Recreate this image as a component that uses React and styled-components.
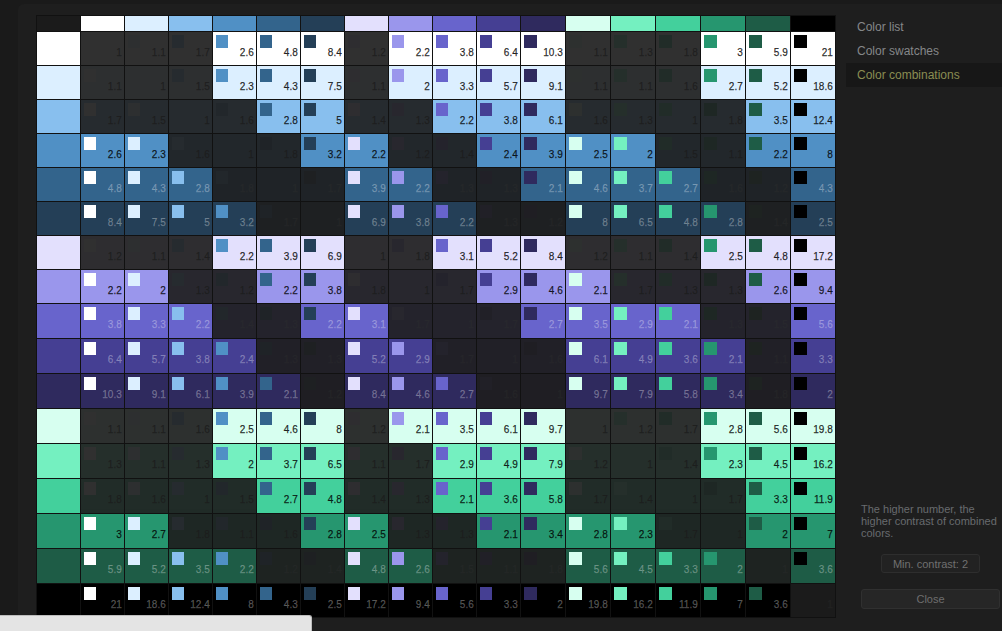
import React from 'react'
import styled, { createGlobalStyle } from 'styled-components'

const GlobalStyle = createGlobalStyle`
  html, body {
    margin: 0;
    height: 100%;
    background: #1a1a1a;
    overflow: hidden;
  }
  * {
    box-sizing: border-box;
  }
`

const colors = [
  { bg: '#ffffff', dark: true },
  { bg: '#dcefff', dark: true },
  { bg: '#88bfee', dark: true },
  { bg: '#5090c5', dark: true },
  { bg: '#33648c' },
  { bg: '#243f57' },
  { bg: '#e3e0fd', dark: true },
  { bg: '#9a96ec', dark: true },
  { bg: '#6864cc' },
  { bg: '#453f93' },
  { bg: '#2f2a5e' },
  { bg: '#d7fff0', dark: true },
  { bg: '#74f0c0', dark: true },
  { bg: '#43d09c', dark: true },
  { bg: '#26966f', dark: true },
  { bg: '#1e5c46' },
  { bg: '#000000' },
]

// upper triangle of the contrast table, the lower half mirrors it
const upper = [
  [1, 1.1, 1.7, 2.6, 4.8, 8.4, 1.2, 2.2, 3.8, 6.4, 10.3, 1.1, 1.3, 1.8, 3, 5.9, 21],
  [1, 1.5, 2.3, 4.3, 7.5, 1.1, 2, 3.3, 5.7, 9.1, 1.1, 1.1, 1.6, 2.7, 5.2, 18.6],
  [1, 1.6, 2.8, 5, 1.4, 1.3, 2.2, 3.8, 6.1, 1.6, 1.3, 1, 1.8, 3.5, 12.4],
  [1, 1.8, 3.2, 2.2, 1.2, 1.4, 2.4, 3.9, 2.5, 2, 1.5, 1.1, 2.2, 8],
  [1, 1.7, 3.9, 2.2, 1.3, 1.3, 2.1, 4.6, 3.7, 2.7, 1.6, 1.2, 4.3],
  [1, 6.9, 3.8, 2.2, 1.3, 1.2, 8, 6.5, 4.8, 2.8, 1.4, 2.5],
  [1, 1.8, 3.1, 5.2, 8.4, 1.2, 1.1, 1.4, 2.5, 4.8, 17.2],
  [1, 1.7, 2.9, 4.6, 2.1, 1.7, 1.3, 1.3, 2.6, 9.4],
  [1, 1.7, 2.7, 3.5, 2.9, 2.1, 1.3, 1.5, 5.6],
  [1, 1.6, 6.1, 4.9, 3.6, 2.1, 1.1, 3.3],
  [1, 9.7, 7.9, 5.8, 3.4, 1.8, 2],
  [1, 1.2, 1.7, 2.8, 5.6, 19.8],
  [1, 1.4, 2.3, 4.5, 16.2],
  [1, 1.7, 3.3, 11.9],
  [1, 2, 7],
  [1, 3.6],
  [1],
]

const contrast = (a, b) => (a <= b ? upper[a][b - a] : upper[b][a - b])

const Shell = styled.div`
  display: flex;
  height: 631px;
  margin-left: 18px;
  padding-top: 4px;
`

const Panel = styled.div`
  display: flex;
  flex: 1;
  align-items: stretch;
  padding: 11px 0 0 18px;
  background: #1e1e1e;
  border-top-left-radius: 6px;
`

const Table = styled.div`
  display: grid;
  grid-template-columns: repeat(11, 43px) repeat(7, 44px);
  grid-template-rows: 15px repeat(8, 33px) repeat(8, 34px) 33px;
  gap: 1px;
  padding: 1px;
  background: #111;
  align-self: flex-start;
`

const Corner = styled.div`
  background: #1b1b1b;
`

const Head = styled.div`
  background: ${(p) => p.$color};
`

const Cell = styled.div`
  display: flex;
  background: #1e1e1e;
`

const Fill = styled.div`
  flex: 1;
  padding: 3px 2px 0 3px;
  background: ${(p) => p.$color};
  opacity: ${(p) => (p.$dim ? 0.08 : 1)};
`

const Swatch = styled.div`
  width: 32.5%;
  height: 13px;
  background: ${(p) => p.$color};
`

const Value = styled.div`
  margin-top: -1px;
  font: 10px/12px 'Liberation Sans', Arial, sans-serif;
  letter-spacing: 0.1px;
  text-align: right;
  -webkit-text-stroke: 0.25px currentColor;
  color: ${(p) => (p.$dark ? 'rgba(0, 0, 0, 0.8)' : 'rgba(255, 255, 255, 0.27)')};
`

const Sidebar = styled.aside`
  display: flex;
  flex-direction: column;
  width: 156px;
  margin-left: 10px;
  padding-bottom: 22px;
  font-family: 'Liberation Sans', Arial, sans-serif;
`

const Nav = styled.nav`
  display: flex;
  flex-direction: column;
`

const NavItem = styled.a`
  height: 24px;
  padding-left: 11px;
  font-size: 12px;
  line-height: 24px;
  color: ${(p) => (p.$active ? '#8a8d52' : '#858789')};
  background: ${(p) => (p.$active ? '#171717' : 'transparent')};
`

const Footer = styled.div`
  display: flex;
  flex-direction: column;
  align-items: center;
  margin-top: auto;
  padding: 0 2px 0 15px;
`

const Note = styled.p`
  margin: 0;
  width: 100%;
  font-size: 11px;
  line-height: 12px;
  color: #686b6e;
`

const Pill = styled.button`
  width: 99px;
  height: 19px;
  margin-top: 15px;
  padding: 0;
  font: 11px 'Liberation Sans', Arial, sans-serif;
  color: #707070;
  background: #222;
  border: 1px solid #2e2e2e;
  border-radius: 3px;
`

const CloseButton = styled.button`
  width: 100%;
  height: 20px;
  margin-top: 16px;
  padding: 0;
  font: 11px 'Liberation Sans', Arial, sans-serif;
  color: #6e6e6e;
  background: #262626;
  border: 1px solid #303030;
  border-radius: 3px;
`

const Tray = styled.div`
  position: absolute;
  left: 0;
  bottom: 0;
  width: 312px;
  height: 16px;
  background: #e4e4e4;
  border-top: 1px solid #bdbdbd;
  border-right: 1px solid #bdbdbd;
  border-top-right-radius: 3px;
`

const App = () => {
  return (
    <>
      <GlobalStyle />
      <Shell>
        <Panel>
          <Table>
            <Corner />
            {colors.map((c) => (
              <Head key={c.bg} $color={c.bg} />
            ))}
            {colors.map((row, r) => (
              <React.Fragment key={row.bg}>
                <Head $color={row.bg} />
                {colors.map((col, c) => {
                  const value = contrast(r, c)
                  return (
                    <Cell key={col.bg}>
                      <Fill $color={row.bg} $dim={value < 2}>
                        <Swatch $color={col.bg} />
                        <Value $dark={row.dark}>{value}</Value>
                      </Fill>
                    </Cell>
                  )
                })}
              </React.Fragment>
            ))}
          </Table>
          <Sidebar>
            <Nav>
              <NavItem>Color list</NavItem>
              <NavItem>Color swatches</NavItem>
              <NavItem $active>Color combinations</NavItem>
            </Nav>
            <Footer>
              <Note>The higher number, the higher contrast of combined colors.</Note>
              <Pill>Min. contrast: 2</Pill>
              <CloseButton>Close</CloseButton>
            </Footer>
          </Sidebar>
        </Panel>
      </Shell>
      <Tray />
    </>
  )
}

export default App
